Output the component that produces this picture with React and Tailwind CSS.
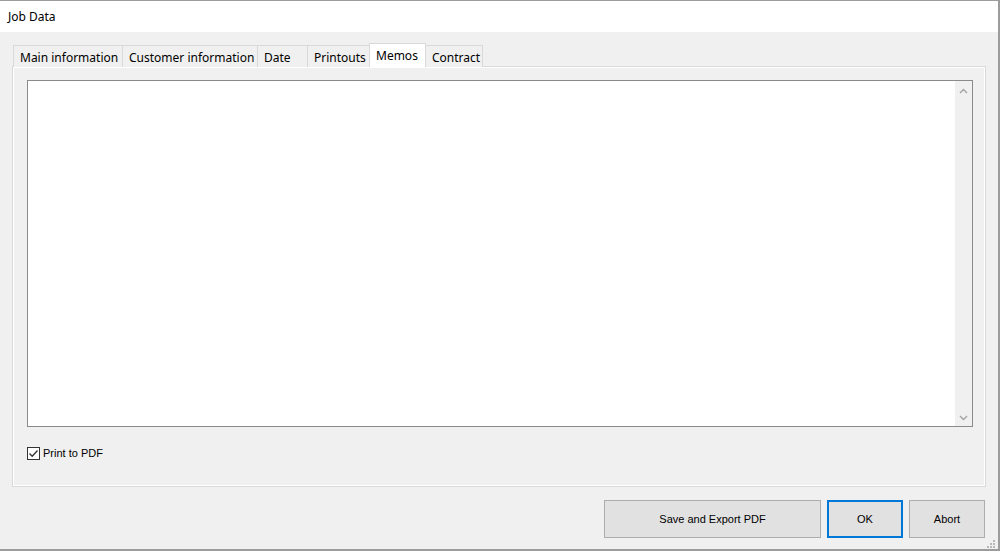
import React from "react";

const tabs = [
  { label: "Main information", w: "w-[110px]" },
  { label: "Customer information", w: "w-[136px]" },
  { label: "Date", w: "w-[51px]" },
  { label: "Printouts", w: "w-[63px]" },
  { label: "Memos", w: "w-[57px]", selected: true },
  { label: "Contract", w: "w-[58px]" },
];

export default function App() {
  return (
    <div className="w-[1000px] h-[551px] flex flex-col border-t border-r-2 border-b-2 border-[#9c9c9c] bg-[#f0f0f0] overflow-hidden">
      {/* Title bar */}
      <div className="h-[32px] bg-white flex items-center pl-[8px] text-[12px] text-black [font-family:'Noto_Sans',sans-serif]">
        Job Data
      </div>

      {/* Body */}
      <div className="flex-1 flex flex-col px-3 pt-[11px]">
        {/* Tabs */}
        <div className="flex items-end h-[24px] pl-px relative z-10 -mb-px [font-family:'Noto_Sans',sans-serif] text-[12px] text-black">
          {tabs.map((t, i) => (
            <div
              key={t.label}
              className={
                t.selected
                  ? `${t.w} h-[24px] -ml-px bg-white border border-b-0 border-[#d9d9d9] flex items-start pt-[3px] pl-[6px] whitespace-nowrap relative z-10`
                  : `${t.w} h-[22px] ${i === 0 ? "" : "-ml-px"} bg-[#f0f0f0] border border-b-0 border-[#d9d9d9] flex items-start pt-[3px] pl-[6px] whitespace-nowrap`
              }
            >
              {t.label}
            </div>
          ))}
        </div>

        {/* Panel */}
        <div className="h-[421px] border border-[#d9d9d9]">
          <div className="h-full border border-white flex flex-col pt-[12px] pl-[13px] pr-[11px]">
            {/* Text box */}
            <div className="h-[347px] border border-[#8a8a8a] bg-white flex justify-end">
              <div className="w-[17px] h-full bg-[#f0f0f0] flex flex-col items-center justify-between pt-[7px] pb-[5px]">
                <svg width="9" height="6" viewBox="0 0 9 6">
                  <path d="M1 5 L4.5 1.5 L8 5" fill="none" stroke="#a3a3a3" strokeWidth="1.4" />
                </svg>
                <svg width="9" height="6" viewBox="0 0 9 6">
                  <path d="M1 1 L4.5 4.5 L8 1" fill="none" stroke="#a3a3a3" strokeWidth="1.4" />
                </svg>
              </div>
            </div>

            {/* Checkbox */}
            <div className="mt-[18px] flex items-center gap-[3px] [font-family:'Liberation_Sans',Arial,sans-serif] text-[11px] text-black">
              <div className="w-[13px] h-[13px] border border-[#333333] bg-white flex items-center justify-center">
                <svg width="11" height="11" viewBox="0 0 11 11">
                  <path d="M1.5 5.5 L4.2 8.2 L9.5 2.5" fill="none" stroke="#333333" strokeWidth="1.3" />
                </svg>
              </div>
              <span>Print to PDF</span>
            </div>
          </div>
        </div>

        {/* Buttons */}
        <div className="flex justify-end mt-[13px] pr-px gap-[6px] [font-family:'Liberation_Sans',Arial,sans-serif] text-[11px] text-black">
          <div className="w-[217px] h-[38px] bg-[#e1e1e1] border border-[#adadad] flex items-center justify-center">
            Save and Export PDF
          </div>
          <div className="w-[76px] h-[38px] bg-[#e1e1e1] border-2 border-[#0078d7] flex items-center justify-center">
            OK
          </div>
          <div className="w-[76px] h-[38px] bg-[#e1e1e1] border border-[#adadad] flex items-center justify-center">
            Abort
          </div>
        </div>

        {/* Resize grip */}
        <div className="flex justify-end -mr-[10px] mt-px">
          <svg width="10" height="10" viewBox="0 0 10 10">
            <rect x="7" y="1" width="2" height="2" fill="#b8b8b8" />
            <rect x="4" y="4" width="2" height="2" fill="#b8b8b8" />
            <rect x="7" y="4" width="2" height="2" fill="#b8b8b8" />
            <rect x="1" y="7" width="2" height="2" fill="#b8b8b8" />
            <rect x="4" y="7" width="2" height="2" fill="#b8b8b8" />
            <rect x="7" y="7" width="2" height="2" fill="#b8b8b8" />
          </svg>
        </div>
      </div>
    </div>
  );
}
